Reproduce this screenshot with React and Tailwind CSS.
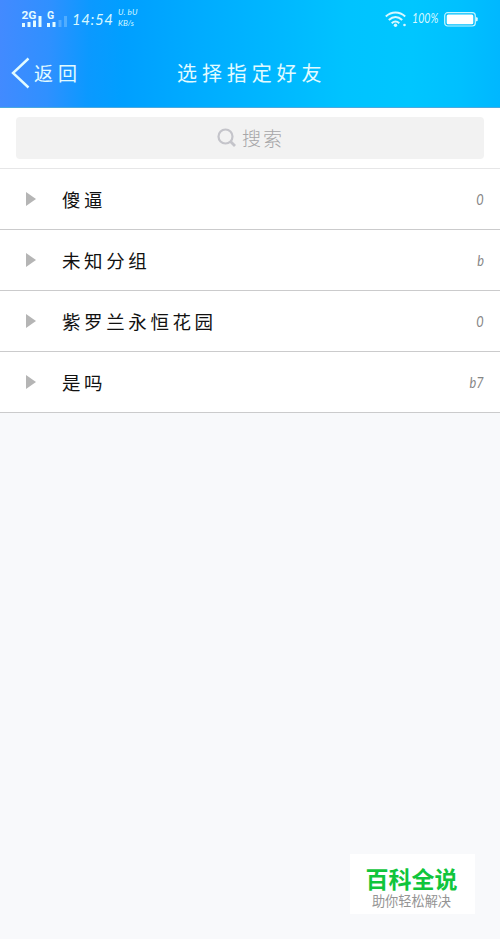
import React from 'react';

const groups = [
  { name: '傻逼', count: '0' },
  { name: '未知分组', count: 'b' },
  { name: '紫罗兰永恒花园', count: '0' },
  { name: '是吗', count: 'b7' },
];

function SignalIcons() {
  return (
    <svg className="h-[18px] w-[47px] shrink-0" viewBox="0 0 47 18" fill="#e4fbff">
      <text x="-0.5" y="9" fontSize="10.5" fontWeight="700" fontFamily="Roboto, sans-serif" textLength="15" lengthAdjust="spacingAndGlyphs">2G</text>
      <text x="25" y="9" fontSize="10.5" fontWeight="700" fontFamily="Roboto, sans-serif">G</text>
      <rect x="0" y="13" width="3" height="4" />
      <rect x="5.500" y="12" width="3" height="5" />
      <rect x="11" y="10.500" width="3" height="6.500" />
      <rect x="16.500" y="6" width="3" height="11" />
      <rect x="25" y="13" width="3" height="4" />
      <rect x="30.500" y="12" width="3" height="5" />
      <rect x="36.500" y="10" width="3" height="7" opacity=".25" />
      <rect x="42" y="6" width="3" height="11" opacity=".25" />
    </svg>
  );
}

function StatusBar() {
  return (
    <div className="flex h-[38px] items-start pl-[22px] pr-[22px] text-[#d7f8ff]">
      <div className="mt-[10px] flex"><SignalIcons /></div>
      <span className="ml-[3px] mt-[9px] w-[42px] whitespace-nowrap font-[Lato,sans-serif] text-[15px] italic leading-[20px] tracking-[0.6px]">14:54</span>
      <div className="ml-1 mt-[7px] flex flex-col font-[Lato,sans-serif] text-[8px] italic leading-[11px]">
        <span className="tracking-[0.2px]">U. bU</span>
        <span>KB/s</span>
      </div>
      <svg className="ml-auto mt-[11px] h-[17px] w-[23px]" viewBox="0 0 23 17" fill="none" stroke="currentColor" strokeWidth="2">
        <path d="M.8 5.500C6.500 .2 14.500 .2 20.200 5.500M3.800 9C8 5.200 13 5.200 17.200 9M6.700 12.200C9.200 9.900 11.800 9.900 14.300 12.200" />
        <circle cx="10.500" cy="14.300" r="1.700" fill="currentColor" stroke="none" />
        <circle cx="19.500" cy="14" r="1.300" fill="currentColor" stroke="none" />
      </svg>
      <span className="ml-[4px] mt-[9px] w-[27px] whitespace-nowrap font-[Lato,sans-serif] text-[11.500px] italic leading-[20px]">
        <span className="inline-block origin-left scale-x-[0.920] scale-y-[1.100]">100%</span>
      </span>
      <svg className="ml-[5px] mt-[12px] h-[15px] w-[34px]" viewBox="0 0 34 15">
        <rect x=".7" y=".7" width="30.600" height="13.300" rx="3" fill="none" stroke="#c5f5ff" strokeWidth="1.200" />
        <rect x="2.700" y="2.500" width="26.600" height="9.700" rx="1.500" fill="#fff" />
        <path d="M32 5.300h.7q1 0 1 1v2q0 1-1 1H32z" fill="#d7f8ff" />
      </svg>
    </div>
  );
}

function Header() {
  return (
    <header className="h-[108px] border-b border-[#4ba9df] bg-[linear-gradient(92deg,#438aff_0%,#2f90ff_10%,#0b99ff_18%,#009fff_25%,#00acff_40%,#00b8ff_56%,#00c3ff_69%,#00c6ff_82%,#00c0ff_92%,#00b7ff_100%)]">
      <StatusBar />
      <div className="grid h-[69px] grid-cols-[177px_1fr] items-center text-[#e2fbff]">
        <div className="flex items-center pl-[11px]">
          <svg className="h-[32px] w-[20px]" viewBox="0 0 20 32" fill="none" stroke="#e2fbff" strokeWidth="2.400">
            <path d="M17.500 1.500L2 16L17.500 30.500" />
          </svg>
          <span className="ml-[3px] text-[19px] font-normal leading-[28px] tracking-[5px]">返回</span>
        </div>
        <h1 className="text-[20px] font-normal leading-[28px] tracking-[4.900px]">选择指定好友</h1>
      </div>
    </header>
  );
}

export default function App() {
  return (
    <main className="min-h-[939px] w-[500px] bg-[#f8f9fb] font-['Noto_Sans_CJK_SC',sans-serif]">
      <Header />
      <div className="h-[61px] border-b border-[#e6e6e7] bg-white px-4 pt-[9px]">
        <div className="flex h-[42px] w-[468px] items-center rounded-[4px] bg-[#f2f2f2] pl-[201px] text-[#a6a6a8]">
          <svg className="h-[20px] w-[20px]" viewBox="0 0 20 20" fill="none" stroke="#c4c4ca" strokeWidth="2.200">
            <circle cx="8.500" cy="8.500" r="7" />
            <path d="M13.500 13.500L18 18" strokeWidth="2.800" />
          </svg>
          <span className="ml-[5px] text-[19px] font-light leading-[28px] tracking-[2px]">搜索</span>
        </div>
      </div>
      <ul>
        {groups.map((group) => (
          <li key={group.name} className="flex h-[61px] items-center border-b border-[#cbcbcc] bg-white pl-[26px] pr-4">
            <svg className="h-[14px] w-[10px]" viewBox="0 0 10 14" fill="#b5b5b5"><path d="M0 0L10 7L0 14z" /></svg>
            <span className="ml-[26px] text-[18.500px] leading-[28px] tracking-[3.600px] text-[#111]">{group.name}</span>
            <span className="ml-auto origin-right scale-x-[0.850] font-[Lato,sans-serif] text-[15px] italic leading-[20px] text-[#858585]">{group.count}</span>
          </li>
        ))}
      </ul>
      <aside className="ml-[350px] mt-[441px] flex h-[60px] w-[125px] flex-col items-center bg-white pr-[2px] pt-[12px]">
        <strong className="text-[23px] font-bold leading-[24px] text-[#10c53c]">百科全说</strong>
        <span className="mt-[1px] text-[13.200px] leading-[20px] text-[#949494]">助你轻松解决</span>
      </aside>
    </main>
  );
}
